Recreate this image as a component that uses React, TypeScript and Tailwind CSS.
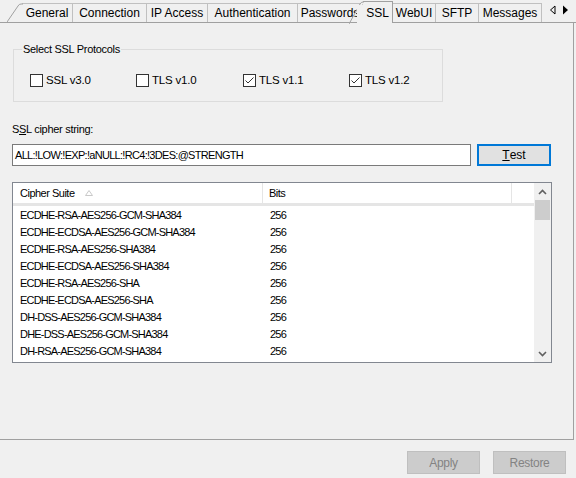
import React from "react";

const TABS = [
  { label: "General", w: 51, slant: true },
  { label: "Connection", w: 74 },
  { label: "IP Access", w: 61 },
  { label: "Authentication", w: 90 },
  { label: "Passwords", w: 65 },
  { label: "SSL", w: 30, selected: true },
  { label: "WebUI", w: 43 },
  { label: "SFTP", w: 43 },
  { label: "Messages", w: 63 },
];

const ROWS = [
  "ECDHE-RSA-AES256-GCM-SHA384",
  "ECDHE-ECDSA-AES256-GCM-SHA384",
  "ECDHE-RSA-AES256-SHA384",
  "ECDHE-ECDSA-AES256-SHA384",
  "ECDHE-RSA-AES256-SHA",
  "ECDHE-ECDSA-AES256-SHA",
  "DH-DSS-AES256-GCM-SHA384",
  "DHE-DSS-AES256-GCM-SHA384",
  "DH-RSA-AES256-GCM-SHA384",
];

const PROTOCOLS = [
  { label: "SSL v3.0", checked: false, w: 106 },
  { label: "TLS v1.0", checked: false, w: 107 },
  { label: "TLS v1.1", checked: true, w: 106 },
  { label: "TLS v1.2", checked: true, w: 80 },
];

function Checkbox({ checked }: { checked: boolean }) {
  return (
    <span className="w-[13px] h-[13px] border border-[#333333] bg-white flex items-center justify-center">
      {checked && (
        <svg width="11" height="11" viewBox="0 0 11 11">
          <path d="M1.5 5.5 L4 8 L9.5 2.5" fill="none" stroke="#333" strokeWidth="1" />
        </svg>
      )}
    </span>
  );
}

function TabStrip() {
  return (
    <div className="relative h-[23px] border-b border-[#a0a0a0] flex items-end pl-[22px]">
      {TABS.map((t) =>
        t.selected ? (
          <div
            key={t.label}
            className="relative h-[22px] -mb-px bg-[#f0f0f0] border-r border-t border-[#a0a0a0] flex items-center justify-center text-[12px] text-black"
            style={{ width: t.w }}
          >
            <svg className="absolute -left-[14px] top-[-1px]" width="15" height="23" viewBox="0 0 15 23">
              <path d="M0 23 L11 3 Q12 1 14 1 L15 1" fill="#f0f0f0" stroke="#a0a0a0" strokeWidth="1" />
              <rect x="8" y="4" width="7" height="19" fill="#f0f0f0" />
            </svg>
            <span className="relative">{t.label}</span>
          </div>
        ) : (
          <div
            key={t.label}
            className="relative h-[19px] bg-[#f0f0f0] border-r border-t border-[#c0c0c0] flex items-center justify-center text-[12px] text-black"
            style={{ width: t.w }}
          >
            {t.slant && (
              <svg className="absolute -left-[15px] top-[-1px]" width="16" height="19" viewBox="0 0 16 19">
                <path d="M0 19 L11 3 Q12 1 14 1 L16 1" fill="#f0f0f0" stroke="#a0a0a0" strokeWidth="1" />
              </svg>
            )}
            <span className="relative">{t.label}</span>
          </div>
        )
      )}
      <div className="ml-[7px] mb-[5px] flex items-center gap-[6px] h-[14px]">
        <svg width="7" height="10" viewBox="0 0 7 10">
          <path d="M6 1 L1.5 5 L6 9 Z" fill="none" stroke="#000" strokeWidth="1" />
        </svg>
        <svg width="7" height="10" viewBox="0 0 7 10">
          <path d="M1 0.5 L6 5 L1 9.5 Z" fill="#000" />
        </svg>
      </div>
    </div>
  );
}

export default function App() {
  return (
    <div
      className="w-[576px] h-[478px] bg-[#f0f0f0] overflow-hidden text-black"
      style={{ fontFamily: '"Liberation Sans", Arial, sans-serif' }}
    >
      <TabStrip />

      <div className="w-[574px] h-[417px] border-r border-b border-[#a0a0a0] px-[13px] pt-[19px]">
        {/* protocols group */}
        <fieldset className="w-[430px] h-[60px] border border-[#dcdcdc] pl-[8px] pt-[12px] m-0">
          <legend className="px-[1px] text-[11px] tracking-[-0.3px] leading-[14px]">
            Select SSL Protocols
          </legend>
          <div className="flex items-center ml-[8px] mt-[4px]">
            {PROTOCOLS.map((p) => (
              <label
                key={p.label}
                className="flex items-center gap-[3px] text-[11.5px] tracking-[-0.2px]"
                style={{ width: p.w }}
              >
                <Checkbox checked={p.checked} />
                <span>{p.label}</span>
              </label>
            ))}
          </div>
        </fieldset>

        <div className="mt-[20px] text-[11px] tracking-[-0.3px] leading-[14px] -ml-px">
          S<span className="underline">S</span>L cipher string:
        </div>

        <div className="mt-[8px] flex items-center -ml-px">
          <div className="w-[459px] h-[22px] bg-white border border-[#7a7a7a] flex items-center px-[2px] text-[11px] tracking-[-0.7px]">
            ALL:!LOW:!EXP:!aNULL:!RC4:!3DES:@STRENGTH
          </div>
          <button className="ml-[6px] w-[74px] h-[22px] bg-[#e1e1e1] border-2 border-[#0078d7] text-[12px] flex items-center justify-center">
            <span className="underline">T</span>est
          </button>
        </div>

        {/* cipher list */}
        <div className="mt-[16px] -ml-px w-[540px] h-[181px] border border-[#828790] bg-white flex">
          <div className="flex-1 flex flex-col">
            <div className="h-[23px] flex items-stretch text-[11px] tracking-[-0.5px] border-b-[3px] border-[#e5e5e5] bg-white">
              <div className="w-[250px] flex items-center pl-[7px] border-r border-[#e5e5e5]">
                Cipher Suite
                <svg className="ml-[10px]" width="8" height="6" viewBox="0 0 8 6">
                  <path d="M0.5 5.5 L4 0.5 L7.5 5.5 Z" fill="none" stroke="#c9c9c9" strokeWidth="1" />
                </svg>
              </div>
              <div className="w-[249px] flex items-center pl-[6px] border-r border-[#e5e5e5]">Bits</div>
              <div className="flex-1" />
            </div>
            <div className="flex flex-col pt-px">
              {ROWS.map((r) => (
                <div key={r} className="h-[17px] flex items-center text-[11px] tracking-[-0.8px] leading-[17px]">
                  <span className="w-[250px] pl-[7px]">{r}</span>
                  <span className="pl-[7px]">256</span>
                </div>
              ))}
            </div>
          </div>
          <div className="w-[17px] bg-[#f0f0f0] flex flex-col items-center">
            <div className="h-[17px] flex items-center justify-center">
              <svg width="9" height="6" viewBox="0 0 9 6">
                <path d="M1 5 L4.5 1.5 L8 5" fill="none" stroke="#606060" strokeWidth="1.6" />
              </svg>
            </div>
            <div className="w-[15px] h-[20px] bg-[#cdcdcd]" />
            <div className="flex-1" />
            <div className="h-[17px] flex items-center justify-center">
              <svg width="9" height="6" viewBox="0 0 9 6">
                <path d="M1 1 L4.5 4.5 L8 1" fill="none" stroke="#606060" strokeWidth="1.6" />
              </svg>
            </div>
          </div>
        </div>
      </div>

      <div className="flex justify-end gap-[13px] pr-[10px] pt-[11px]">
        <button className="w-[73px] h-[23px] bg-[#cccccc] border border-[#bfbfbf] text-[12px] tracking-[-0.3px] text-[#838383]">
          Apply
        </button>
        <button className="w-[73px] h-[23px] bg-[#cccccc] border border-[#bfbfbf] text-[12px] tracking-[-0.3px] text-[#838383]">
          Restore
        </button>
      </div>
    </div>
  );
}
